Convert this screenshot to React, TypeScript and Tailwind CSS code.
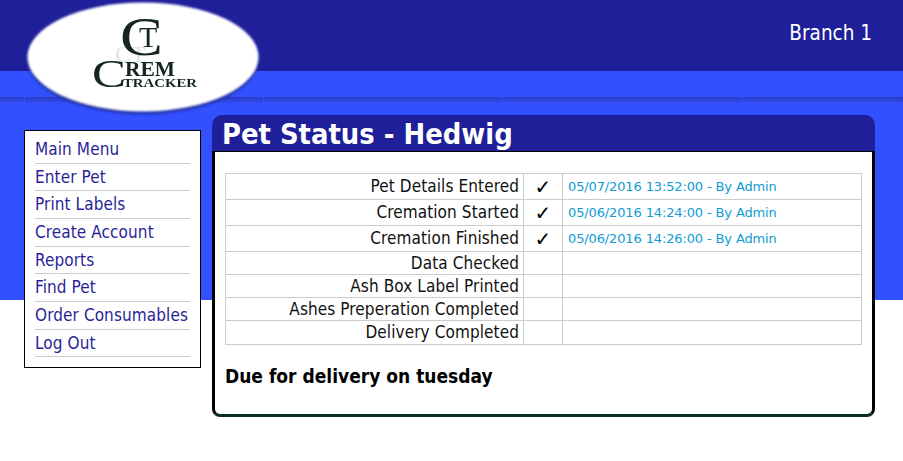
const menu = ["Main Menu","Enter Pet","Print Labels","Create Account","Reports","Find Pet","Order Consumables","Log Out"];
const menuHeights = ["h-[28px]","h-[27px]","h-[28px]","h-[28px]","h-[27px]","h-[28px]","h-[28px]","h-[27px]"];
const rows = [
  { label: "Pet Details Entered", done: true, info: "05/07/2016 13:52:00 - By Admin", h: "h-[26px]" },
  { label: "Cremation Started", done: true, info: "05/06/2016 14:24:00 - By Admin", h: "h-[26px]" },
  { label: "Cremation Finished", done: true, info: "05/06/2016 14:26:00 - By Admin", h: "h-[26px]" },
  { label: "Data Checked", done: false, info: "", h: "h-[23px]" },
  { label: "Ash Box Label Printed", done: false, info: "", h: "h-[23px]" },
  { label: "Ashes Preperation Completed", done: false, info: "", h: "h-[23px]" },
  { label: "Delivery Completed", done: false, info: "", h: "h-[24px]" },
];
const bandSegments = ["w-[24px]", "w-[238px]", "w-[239px]", "w-[239px]", "w-[160px]"];

function Logo() {
  return (
    <svg className="absolute left-[20px] top-0" width="250" height="120" viewBox="0 0 250 120">
      <defs>
        <filter id="soft" x="-10%" y="-10%" width="120%" height="120%"><feGaussianBlur stdDeviation="1.6" /></filter>
        <filter id="edge" x="-10%" y="-10%" width="120%" height="120%"><feGaussianBlur stdDeviation="0.8" /></filter>
        <filter id="ink" x="-10%" y="-10%" width="120%" height="120%"><feGaussianBlur stdDeviation="0.3" /></filter>
      </defs>
      <ellipse cx="123" cy="59" rx="116" ry="55" fill="#1c2a9c" filter="url(#soft)" />
      <ellipse cx="123" cy="57" rx="115.5" ry="54.5" fill="#ffffff" filter="url(#edge)" />
      <g fontFamily="'Liberation Serif', serif">
        <text x="95" y="62" fontSize="24" fill="#e6e6e6">CT</text>
      </g>
      <g fontFamily="'Liberation Serif', serif" fill="#12261e" filter="url(#ink)">
        <text x="100" y="55" fontSize="55" textLength="43" lengthAdjust="spacingAndGlyphs">C</text>
        <text x="119" y="47" fontSize="30">T</text>
        <text x="72" y="87" fontSize="40" textLength="34" lengthAdjust="spacingAndGlyphs">C</text>
        <text x="105" y="76" fontSize="20" fontWeight="700" textLength="50" lengthAdjust="spacingAndGlyphs">REM</text>
        <text x="103" y="87" fontSize="13.5" fontWeight="700" textLength="74" lengthAdjust="spacingAndGlyphs">TRACKER</text>
      </g>
    </svg>
  );
}

export default function App() {
  return (
    <div className="relative h-[461px] w-[903px] overflow-hidden bg-white font-['DejaVu_Sans_Condensed','DejaVu_Sans',sans-serif]">
      <header className="flex h-[71px] justify-end bg-[#1f1f99] pr-[31px] pt-[20px] text-[20.5px] leading-[26px] text-white">
        Branch 1
      </header>
      <div className="h-[229px] bg-[#3350ff]">
        <div className="h-[26px]" />
        <div className="flex h-[7px] gap-[1px]">
          {bandSegments.map((w) => (
            <div key={w} className={`${w} bg-gradient-to-b from-[#2a3cc2] to-[#3350ff]`} />
          ))}
        </div>
        <div className="flex items-start pl-[24px] pt-[11px]">
          <nav className="mt-[15px] h-[238px] w-[177px] shrink-0 border border-black bg-white px-[10px] pt-[5px]">
            {menu.map((m, i) => (
              <a key={m} className={`${menuHeights[i]} block border-b border-[#cccccc] text-[17px] leading-[26px] tracking-[0.1px] whitespace-nowrap text-[#2a1f99]`}>{m}</a>
            ))}
          </nav>
          <main className="ml-[11px] w-[663px] shrink-0">
            <div className="h-[36px] rounded-t-[10px] bg-[#1f1f99] pl-[10px] text-[28.8px] leading-[38px] font-bold text-white">Pet Status - Hedwig</div>
            <div className="h-[266px] rounded-b-[8px] border-x-[3px] border-t border-b-[3px] border-x-black border-t-black border-b-[#0a2e25] bg-white px-[10px] pt-[21px]">
              <table className="w-[637px] table-fixed border-collapse">
                <colgroup><col className="w-[298px]" /><col className="w-[39px]" /><col className="w-[299px]" /></colgroup>
                <tbody>
                  {rows.map((r, i) => (
                    <tr key={r.label} className={r.h}>
                      <td className={`border border-[#cccccc] p-0 pr-[4px] text-right text-[17px] leading-[20px] tracking-[0.1px] text-[#111111] ${i >= 3 && i < 6 ? "pb-[1px]" : "pb-[2px]"}`}>{r.label}</td>
                      <td className="border border-[#cccccc] p-0 text-center font-['DejaVu_Sans',sans-serif] text-[20px] leading-[20px] font-bold text-black">{r.done ? "✓" : ""}</td>
                      <td className="border border-[#cccccc] p-0 pl-[5px] font-['DejaVu_Sans',sans-serif] text-[13px] leading-[20px] tracking-[-0.13px] text-[#0f9bd4]">{r.info}</td>
                    </tr>
                  ))}
                </tbody>
              </table>
              <p className="mt-[18px] text-[19px] leading-[26px] font-bold text-black">Due for delivery on tuesday</p>
            </div>
          </main>
        </div>
      </div>
      <Logo />
    </div>
  );
}
